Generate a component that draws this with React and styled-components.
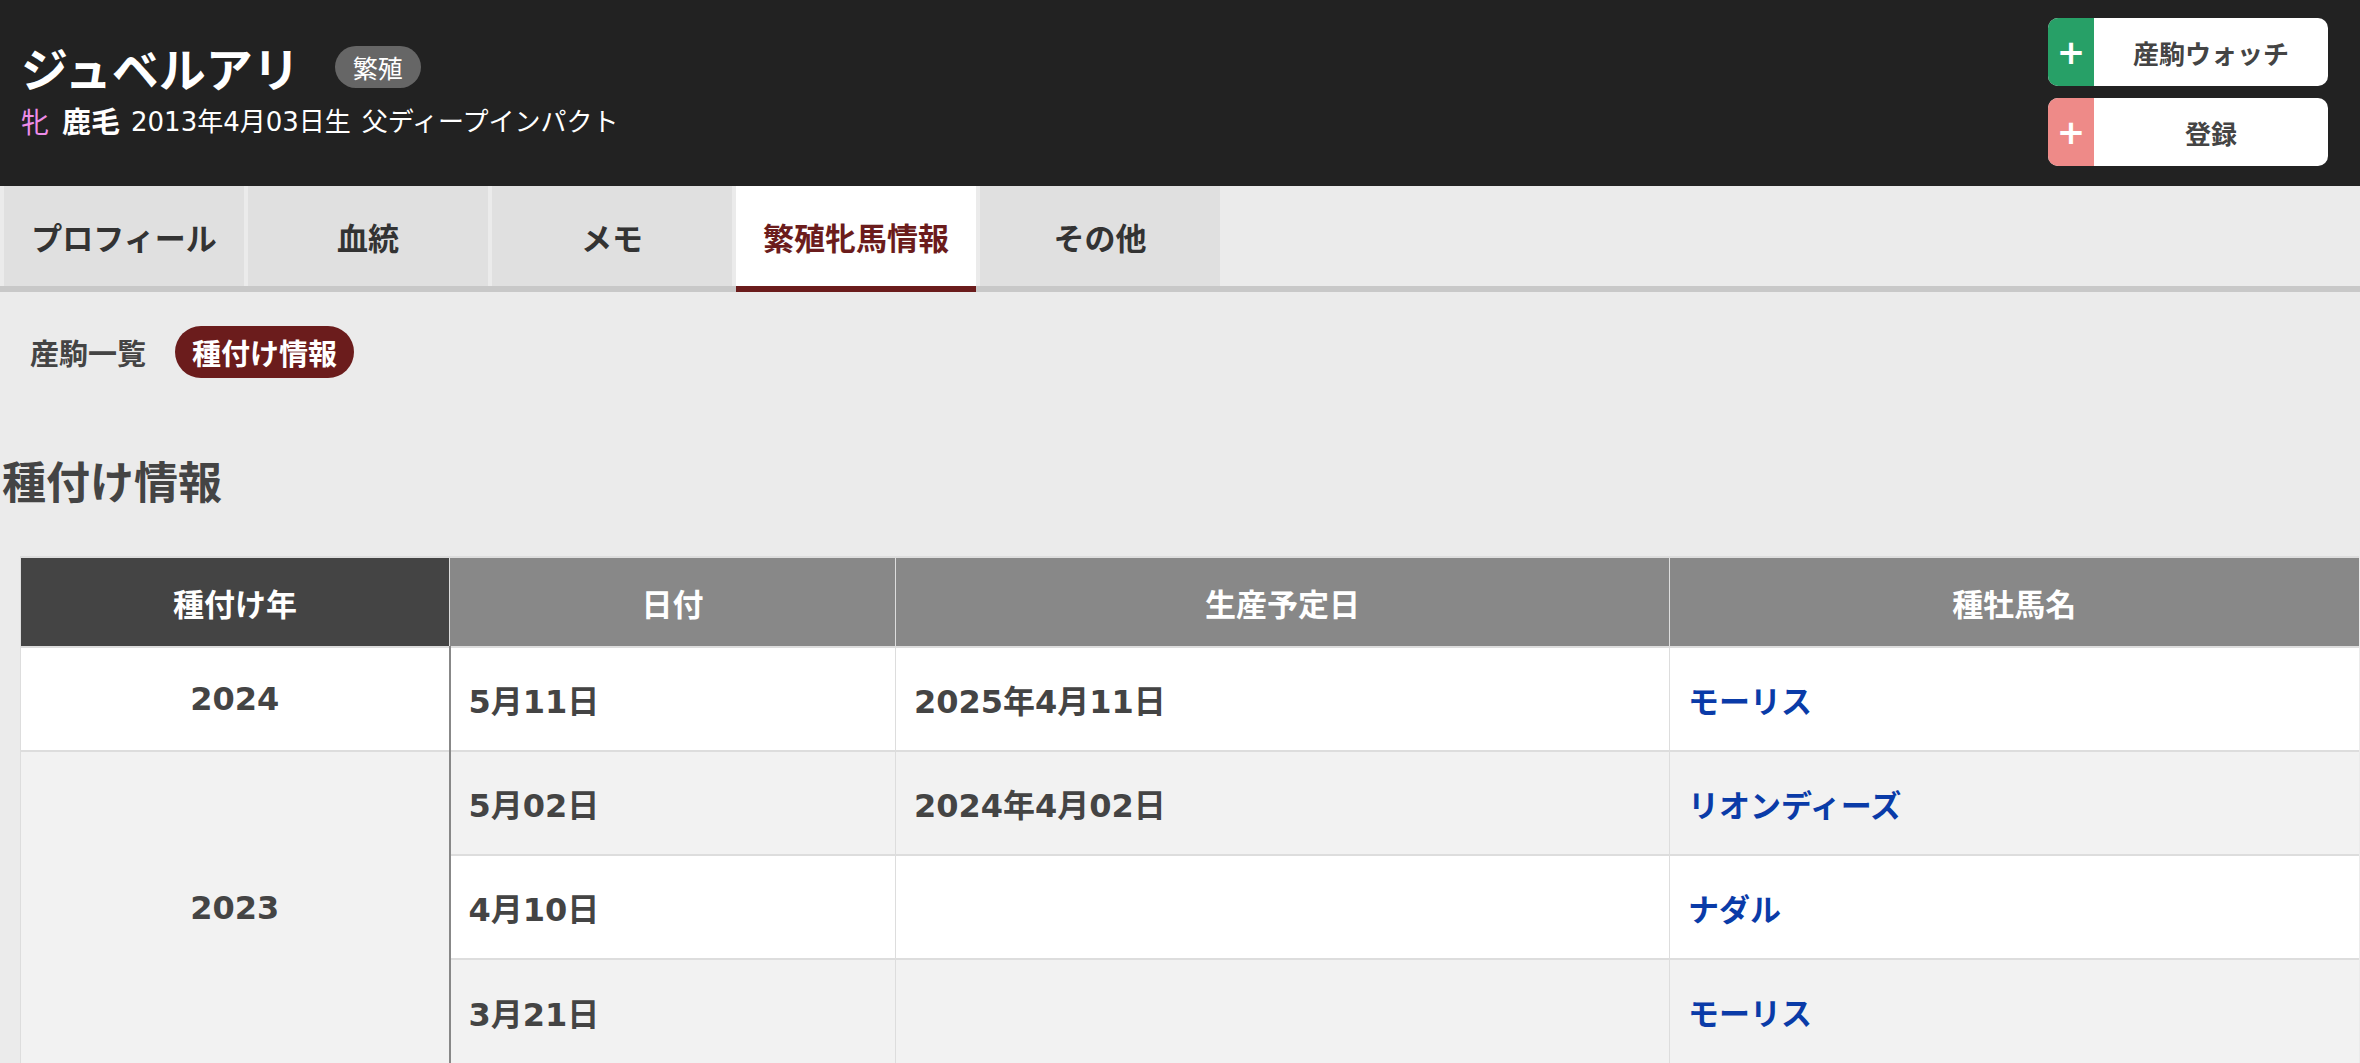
import React from 'react';
import styled, { createGlobalStyle } from 'styled-components';

const GlobalStyle = createGlobalStyle`
  html, body { margin: 0; padding: 0; }
  body {
    background: #ebebeb;
    font-family: "Noto Sans CJK JP", "Noto Sans", sans-serif;
    color: #444;
  }
`;

const Header = styled.header`
  background: #222;
  height: 186px;
  box-sizing: border-box;
  display: flex;
  justify-content: space-between;
  align-items: flex-start;
  padding: 0 32px 0 21px;
`;

const Info = styled.div`
  padding-top: 36px;
  display: flex;
  flex-direction: column;
  gap: 3px;
`;

const TitleRow = styled.div`
  display: flex;
  align-items: center;
  height: 62px;
`;

const Title = styled.h1`
  margin: 0;
  font-size: 47px;
  line-height: 62px;
  font-weight: 700;
  color: #fff;
`;

const Badge = styled.span`
  margin-left: 35px;
  height: 42px;
  padding: 0 18px;
  border-radius: 21px;
  background: #666;
  color: #fff;
  font-size: 25px;
  display: inline-flex;
  align-items: center;
`;

const SubLine = styled.div`
  display: flex;
  align-items: center;
  gap: 11px;
  font-family: "DejaVu Sans", "Noto Sans CJK JP", sans-serif;
  font-size: 26px;
  line-height: 38px;
  color: #fff;
`;

const Sex = styled.span`
  font-family: "Noto Sans CJK JP", sans-serif;
  font-size: 28px;
  color: #ee8ce8;
  margin-right: 13px;
`;

const Strong = styled.span`
  font-family: "Noto Sans CJK JP", sans-serif;
  font-size: 29px;
  font-weight: 700;
`;

const Actions = styled.div`
  padding-top: 18px;
  display: flex;
  flex-direction: column;
  gap: 12px;
`;

const ActionButton = styled.button`
  width: 280px;
  height: 68px;
  padding: 0;
  border: none;
  border-radius: 10px;
  overflow: hidden;
  background: #fff;
  display: flex;
  font-family: inherit;
  cursor: pointer;
`;

const Plus = styled.span`
  width: 46px;
  height: 100%;
  background: ${p => p.$color};
  color: #fff;
  font-family: "DejaVu Sans", sans-serif;
  font-size: 34px;
  font-weight: 700;
  display: flex;
  align-items: center;
  justify-content: center;
`;

const ButtonLabel = styled.span`
  flex: 1;
  display: flex;
  align-items: center;
  justify-content: center;
  font-size: 26px;
  font-weight: 700;
  color: #444;
`;

const TabBar = styled.nav`
  display: flex;
  gap: 4px;
  padding-left: 4px;
  box-shadow: inset 0 -6px 0 #c8c8c8;
`;

const Tab = styled.div`
  width: 240px;
  height: 100px;
  border-bottom: 6px solid ${p => (p.$active ? '#6b1c1c' : '#c8c8c8')};
  background: ${p => (p.$active ? '#fff' : '#e0e0e0')};
  color: ${p => (p.$active ? '#6b1c1c' : '#333')};
  font-size: 31px;
  font-weight: 700;
  display: flex;
  align-items: center;
  justify-content: center;
`;

const SubNav = styled.div`
  display: flex;
  align-items: center;
  gap: 29px;
  padding: 34px 0 0 30px;
`;

const SubLink = styled.span`
  font-size: 29px;
  font-weight: 700;
  color: #444;
`;

const Pill = styled.span`
  height: 52px;
  padding: 0 17px;
  border-radius: 26px;
  background: #6b1c1c;
  color: #fff;
  font-size: 29px;
  font-weight: 700;
  display: inline-flex;
  align-items: center;
`;

const Heading = styled.h2`
  margin: 72px 0 0;
  padding-left: 2px;
  font-size: 44px;
  line-height: 60px;
  font-weight: 700;
  color: #444;
`;

const Table = styled.table`
  margin: 46px 0 0 20px;
  width: 2338px;
  border-collapse: collapse;
  table-layout: fixed;
  border-top: 2px solid #ddd;
`;

const Th = styled.th`
  height: 88px;
  padding: 0;
  background: ${p => (p.$dark ? '#444' : '#888')};
  color: #fff;
  font-size: 31px;
  font-weight: 700;
  text-align: center;
  border-left: 1px solid #ddd;
`;

const Row = styled.tr`
  height: 104px;
  background: ${p => (p.$striped ? '#f2f2f2' : '#fff')};
`;

const Td = styled.td`
  padding: 0 18px;
  border-top: 2px solid #ddd;
  border-left: 1px solid #ddd;
  font-family: "DejaVu Sans", "Noto Sans CJK JP", sans-serif;
  font-size: 32px;
  font-weight: 700;
  color: #444;
  text-align: left;
`;

const YearCell = styled(Td)`
  text-align: center;
  border-right: 2px solid #888;
`;

const HorseLink = styled.a`
  font-family: "Noto Sans CJK JP", sans-serif;
  font-size: 31px;
  color: #0a3ba8;
  text-decoration: none;
`;

const tabs = ['プロフィール', '血統', 'メモ', '繁殖牝馬情報', 'その他'];

const groups = [
  {
    year: '2024',
    rows: [{ date: '5月11日', due: '2025年4月11日', sire: 'モーリス' }],
  },
  {
    year: '2023',
    rows: [
      { date: '5月02日', due: '2024年4月02日', sire: 'リオンディーズ' },
      { date: '4月10日', due: '', sire: 'ナダル' },
      { date: '3月21日', due: '', sire: 'モーリス' },
    ],
  },
];

export default function App() {
  let rowIndex = 0;
  return (
    <>
      <GlobalStyle />
      <Header>
        <Info>
          <TitleRow>
            <Title>ジュベルアリ</Title>
            <Badge>繁殖</Badge>
          </TitleRow>
          <SubLine>
            <span>
              <Sex>牝</Sex>
              <Strong>鹿毛</Strong>
            </span>
            <span>2013年4月03日生</span>
            <span>父ディープインパクト</span>
          </SubLine>
        </Info>
        <Actions>
          <ActionButton>
            <Plus $color="#27a067">+</Plus>
            <ButtonLabel>産駒ウォッチ</ButtonLabel>
          </ActionButton>
          <ActionButton>
            <Plus $color="#ee8a88">+</Plus>
            <ButtonLabel>登録</ButtonLabel>
          </ActionButton>
        </Actions>
      </Header>

      <TabBar>
        {tabs.map(t => (
          <Tab key={t} $active={t === '繁殖牝馬情報'}>{t}</Tab>
        ))}
      </TabBar>

      <SubNav>
        <SubLink>産駒一覧</SubLink>
        <Pill>種付け情報</Pill>
      </SubNav>

      <Heading>種付け情報</Heading>

      <Table>
        <colgroup>
          <col style={{ width: 429 }} />
          <col style={{ width: 446 }} />
          <col style={{ width: 774 }} />
          <col style={{ width: 689 }} />
        </colgroup>
        <thead>
          <tr>
            <Th $dark>種付け年</Th>
            <Th>日付</Th>
            <Th>生産予定日</Th>
            <Th>種牡馬名</Th>
          </tr>
        </thead>
        <tbody>
          {groups.map(g =>
            g.rows.map((r, i) => {
              const striped = rowIndex % 2 === 1;
              rowIndex += 1;
              return (
                <Row key={g.year + r.date} $striped={striped}>
                  {i === 0 && <YearCell rowSpan={g.rows.length}>{g.year}</YearCell>}
                  <Td>{r.date}</Td>
                  <Td>{r.due}</Td>
                  <Td>
                    <HorseLink href="#">{r.sire}</HorseLink>
                  </Td>
                </Row>
              );
            })
          )}
        </tbody>
      </Table>
    </>
  );
}
